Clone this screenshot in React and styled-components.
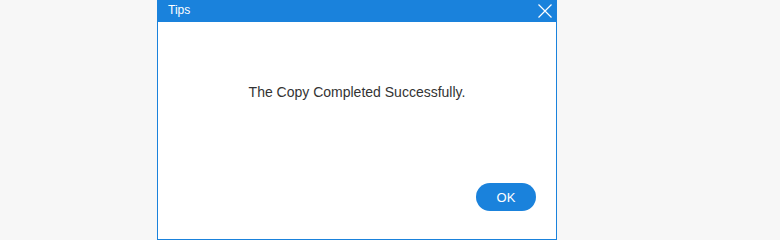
import * as React from "react";
import styled, {createGlobalStyle} from "styled-components";

const Global = createGlobalStyle`
  html, body {
    margin: 0;
    padding: 0;
    background: #f7f7f7;
    font-family: "Liberation Sans", Arial, sans-serif;
  }
`

const Page = styled.div`
  width: 780px;
  height: 240px;
  display: flex;
  align-items: flex-start;
  padding-left: 157px;
  box-sizing: border-box;
`

const Dialog = styled.div`
  width: 400px;
  height: 240px;
  box-sizing: border-box;
  border: 1px solid #1a82dc;
  border-top: none;
  background: #fff;
  display: flex;
  flex-direction: column;
`

const Header = styled.div`
  height: 22px;
  margin: 0 -1px;
  background: #1a82dc;
  color: #fff;
  font-size: 12px;
  display: flex;
  align-items: center;
  justify-content: space-between;
  padding: 0 4px 0 11px;
`

const Title = styled.span`
  line-height: 22px;
  margin-top: -2px;
`

const Close = styled.button`
  border: none;
  background: none;
  padding: 0;
  width: 16px;
  height: 16px;
  display: flex;
  align-items: center;
  justify-content: center;
  cursor: pointer;
`

const Body = styled.div`
  flex: 1;
  display: flex;
  flex-direction: column;
`

const Message = styled.p`
  margin: 62px 0 0;
  text-align: center;
  font-size: 14px;
  color: #333;
  line-height: 16px;
`

const Footer = styled.div`
  margin-top: auto;
  display: flex;
  justify-content: flex-end;
  padding: 0 20px 28px 0;
`

const Button = styled.button`
  width: 60px;
  height: 28px;
  border: none;
  border-radius: 14px;
  background: #1a82dc;
  color: #fff;
  font-family: "Liberation Sans", Arial, sans-serif;
  font-size: 13px;
  cursor: pointer;
`

const App = () => (
  <Page>
    <Global/>
    <Dialog>
      <Header>
        <Title>Tips</Title>
        <Close aria-label="close">
          <svg width="14" height="14" viewBox="0 0 14 14">
            <path d="M0.5 0.5L13.5 13.5M13.5 0.5L0.5 13.5" stroke="#fff" strokeWidth="1.2" fill="none"/>
          </svg>
        </Close>
      </Header>
      <Body>
        <Message>The Copy Completed Successfully.</Message>
        <Footer>
          <Button>OK</Button>
        </Footer>
      </Body>
    </Dialog>
  </Page>
)

export default App
